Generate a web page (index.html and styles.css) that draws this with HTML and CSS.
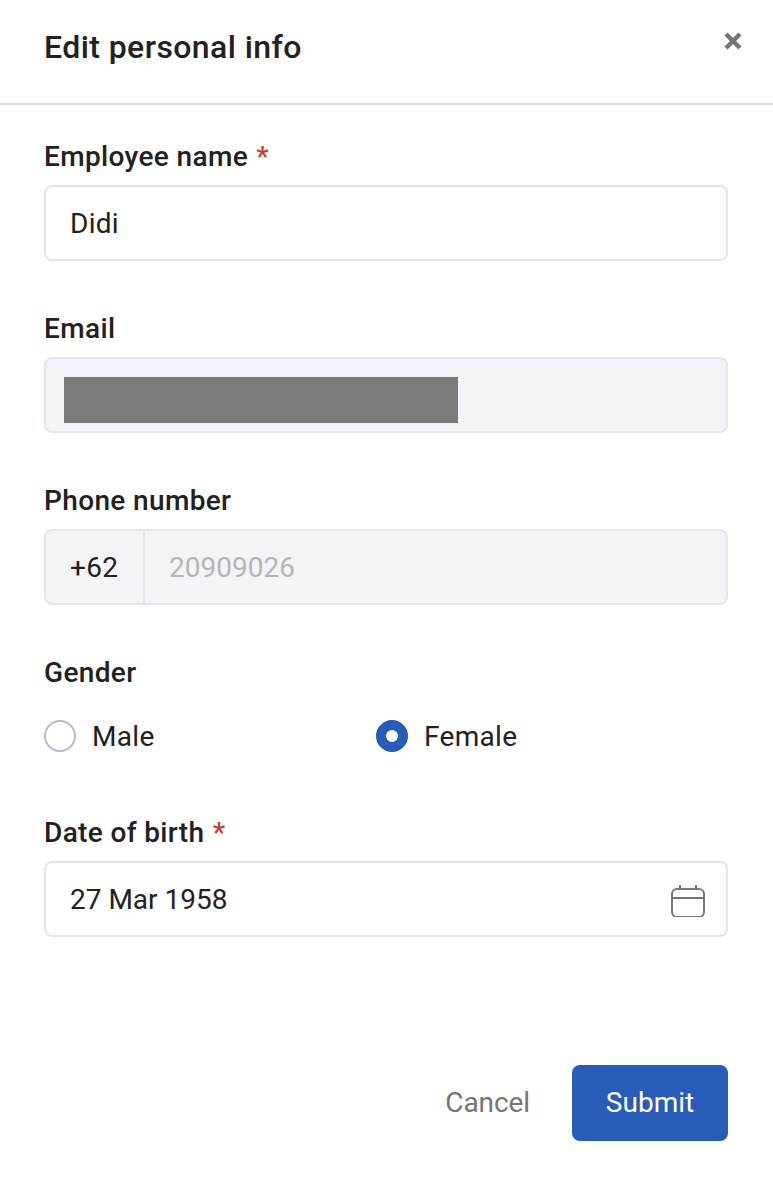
FILE: index.html
```html
<!DOCTYPE html>
<html lang="en">
<head>
    <meta charset="UTF-8">
    <meta name="viewport" content="width=device-width, initial-scale=1.0">
    <title>Edit personal info</title>
    <link rel="stylesheet" href="styles.css">
</head>
<body>

    <!-- Header -->
    <div class="header">
        <h1 class="title">Edit personal info</h1>
        <svg class="close" width="20" height="20" viewBox="0 0 20 20">
            <path d="M3 3L17 17M17 3L3 17" stroke="#757575" stroke-width="4.4" fill="none"/>
        </svg>
    </div>

    <form class="form">
        <div class="field">
            <div class="label">Employee name <span class="req">*</span></div>
            <div class="input">Didi</div>
        </div>

        <div class="field">
            <div class="label">Email</div>
            <div class="input disabled">
                <div class="redacted"></div>
            </div>
        </div>

        <div class="field">
            <div class="label">Phone number</div>
            <div class="input disabled phone">
                <div class="prefix">+62</div>
                <div class="phone-value">20909026</div>
            </div>
        </div>

        <div class="field gender">
            <div class="label">Gender</div>
            <div class="radios">
                <div class="radio"><span class="dot"></span>Male</div>
                <div class="radio"><span class="dot checked"></span>Female</div>
            </div>
        </div>

        <div class="field">
            <div class="label">Date of birth <span class="req">*</span></div>
            <div class="input date">
                27 Mar 1958
                <svg width="36" height="36" viewBox="0 0 36 36" fill="none" stroke="#757575" stroke-width="2">
                    <rect x="2" y="8" width="32" height="28" rx="5"/>
                    <path d="M2 17H34M10 4V8M26 4V8"/>
                </svg>
            </div>
        </div>

        <div class="actions">
            <button type="button" class="cancel">Cancel</button>
            <button type="button" class="submit">Submit</button>
        </div>
    </form>

</body>
</html>
```

FILE: styles.css
```css
* {
    box-sizing: border-box;
}

body {
    margin: 0;
    background: #fff;
    color: #212121;
    font-family: Roboto, "Liberation Sans", sans-serif;
    font-size: 28px;
}

.header {
    display: flex;
    justify-content: space-between;
    align-items: flex-start;
    height: 105px;
    padding: 27px 30px 0 44px;
    border-bottom: 2px solid #e0e0e0;
}

.title {
    margin: 0;
    font-size: 32px;
    font-weight: 500;
    line-height: 40px;
    letter-spacing: 0.42px;
}

.close {
    margin-top: 4px;
}

.form {
    padding: 34px 45px 0 44px;
}

.field {
    margin-bottom: 50px;
}

.label {
    height: 46px;
    font-size: 28px;
    font-weight: 500;
    line-height: 36px;
    letter-spacing: 0.36px;
}

.req {
    margin-left: 1px;
    color: #c8402a;
}

.input {
    display: flex;
    align-items: center;
    height: 76px;
    padding: 0 24px;
    border: 2px solid #e3e5e8;
    border-radius: 8px;
    letter-spacing: 0.3px;
}

.disabled {
    background: #f3f4f8;
}

.redacted {
    width: 394px;
    height: 46px;
    margin: 10px 0 0 -6px;
    background: #7b7b7b;
}

.phone {
    padding: 0;
}

.prefix {
    display: flex;
    align-items: center;
    width: 99px;
    height: 100%;
    padding-left: 24px;
    border-right: 2px solid #e3e5e8;
}

.phone-value {
    padding-left: 24px;
    color: #b5b5b5;
    letter-spacing: 0;
}

.gender {
    margin-bottom: 55px;
}

.radios {
    display: flex;
    height: 48px;
    align-items: center;
    margin-top: 11px;
}

.radio {
    display: flex;
    align-items: center;
    gap: 16px;
    width: 332px;
    letter-spacing: 0.3px;
}

.dot {
    width: 32px;
    height: 32px;
    border: 2px solid #b4bbc6;
    border-radius: 50%;
}

.checked {
    border: 10px solid #275cb8;
}

.date {
    justify-content: space-between;
    padding-right: 20px;
    letter-spacing: 0;
}

.actions {
    display: flex;
    justify-content: flex-end;
    align-items: center;
    margin-top: 128px;
}

.cancel,
.submit {
    height: 76px;
    padding-bottom: 2px;
    border: 0;
    border-radius: 8px;
    font-family: inherit;
    font-size: 28px;
}

.cancel {
    padding-right: 42px;
    padding-left: 0;
    background: none;
    color: #757575;
    letter-spacing: -0.1px;
}

.submit {
    width: 156px;
    background: #275cb8;
    color: #fff;
    letter-spacing: 0;
}
```
